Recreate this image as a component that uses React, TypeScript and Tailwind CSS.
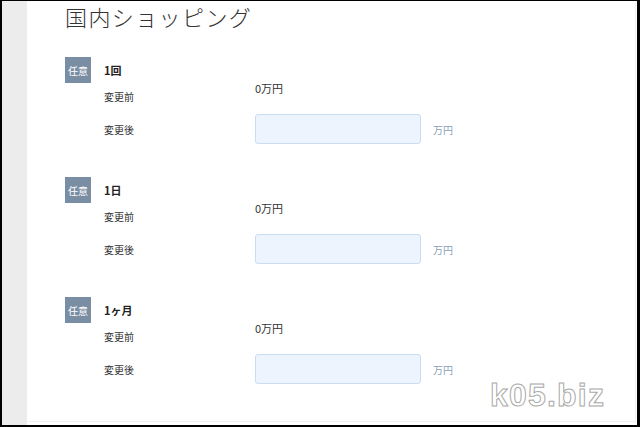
import React from 'react';

const sections = ['1回', '1日', '1ヶ月'];

function Section({ title }: { title: string }) {
  return (
    <div className="flex">
      {/* badge */}
      <div className="w-[26px] h-[26px] bg-[#7a8ea3] text-white text-[10px] flex items-center justify-center shrink-0">
        任意
      </div>
      <div className="ml-[13px] flex flex-col">
        <div className="h-[26px] flex items-center text-[11px] font-bold text-[#222]">{title}</div>
        <div className="flex h-[31px]">
          <div className="w-[151px] pt-[8px] text-[10px] leading-[12px] text-[#333]">変更前</div>
          <div className="text-[11px] leading-[11px] text-[#333]">0万円</div>
        </div>
        <div className="flex items-center h-[30px]">
          <div className="w-[151px] text-[10px] text-[#333]">変更後</div>
          <div className="w-[166px] h-[30px] rounded-[3px] border border-[#c9ddf1] bg-[#edf4fe]" />
          <div className="ml-[12px] text-[10px] text-[#8aa1b8]">万円</div>
        </div>
      </div>
    </div>
  );
}

export default function App() {
  return (
    <div
      className="w-[640px] h-[427px] bg-black pt-[1px] pl-[2px] pr-[3px] pb-[2px] overflow-hidden"
      style={{ fontFamily: '"Noto Sans CJK JP", "Liberation Sans", sans-serif' }}
    >
      <div className="relative flex h-full bg-white">
        {/* left gray rail */}
        <div className="w-[25px] bg-[#ececec] shrink-0" />
        <div className="flex-1 bg-white">
          <div className="h-[421px] mr-[1px] border-r border-b border-[#f0f0f0] pl-[38px]">
            <h1 className="text-[22px] leading-[30px] font-light text-[#333] tracking-[1.4px]">国内ショッピング</h1>
            <div className="mt-[26px] flex flex-col gap-[33px]">
              {sections.map((s) => (
                <Section key={s} title={s} />
              ))}
            </div>
          </div>
        </div>
        {/* watermark */}
        <div
          className="absolute left-[488px] top-[376px] text-[32px] leading-[36px] font-bold tracking-[1.2px] text-white [-webkit-text-stroke:1px_#a9a9a9]"
          style={{ fontFamily: '"Liberation Sans", sans-serif' }}
        >
          k05.biz
        </div>
      </div>
    </div>
  );
}
